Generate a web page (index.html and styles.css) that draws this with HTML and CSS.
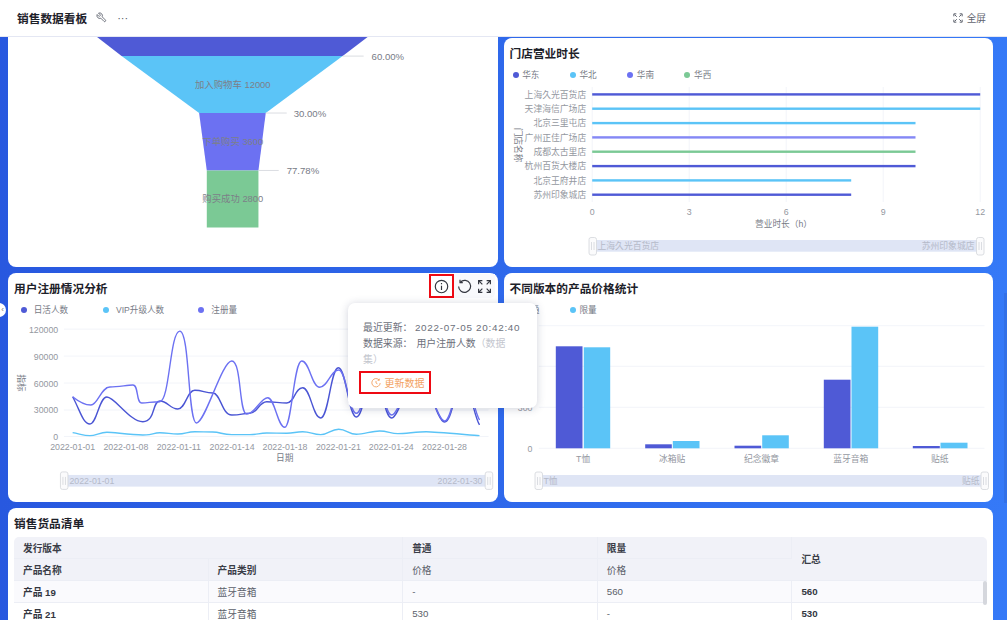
FILE: index.html
```html
<!DOCTYPE html>
<html lang="zh-CN">
<head>
    <meta charset="UTF-8">
    <meta name="viewport" content="width=device-width, initial-scale=1.0">
    <title>销售数据看板</title>
    <link rel="stylesheet" href="styles.css">
</head>
<body>
    <header class="topbar">
        <div class="topbar-left">
            <span class="board-title">销售数据看板</span>
            <svg class="wrench-icon" viewBox="0 0 24 24"><path d="M9.300 6.300a1 1 0 0 1 0 1.400L7.700 9.300a1 1 0 0 1-1.400 0L2.530 5.530a6 6 0 0 0 7.940 7.940l6.910 6.910a2.120 2.120 0 0 0 3-3l-6.910-6.910a6 6 0 0 0-7.940-7.940l3.760 3.760z"/></svg>
            <span class="more-dots">···</span>
        </div>
        <div class="topbar-right">
            <svg class="full-icon" viewBox="0 0 12 12"><path d="M1 4V1h3M8 1h3v3M11 8v3H8M4 11H1V8M2 2l2.500 2.500M10 2L7.500 4.500M10 10L7.500 7.500M2 10l2.500-2.500"/></svg>
            <span>全屏</span>
        </div>
    </header>

    <main class="board">
        <section class="card card-funnel">
            <svg class="chart chart-funnel" viewBox="8 30 490 237">
                <polygon fill="#4f5ad6" points="88.300,30 377,30 343,56 121.700,56"/>
                <polygon fill="#5bc4f7" points="121.700,56 343,56 266,113 199.300,113"/>
                <polygon fill="#6c71f2" points="199.300,113 266,113 258.700,170.500 207,170.500"/>
                <polygon fill="#7bc995" points="207,170.500 258.700,170.500 258.700,227.500 207,227.500"/>
                <path class="leader" d="M343 56h21M266 113h21M259 170.500h20"/>
                <text class="funnel-label" x="233" y="88">加入购物车 12000</text>
                <text class="funnel-label" x="233" y="145">下单购买 3600</text>
                <text class="funnel-label" x="233" y="202">购买成功 2800</text>
                <text class="percent" x="372" y="59.500">60.00%</text>
                <text class="percent" x="294" y="116.500">30.00%</text>
                <text class="percent" x="287" y="174">77.78%</text>
            </svg>
        </section>

        <section class="card">
            <h2 class="card-title">门店营业时长</h2>
            <div class="legend legend-tight">
                <span class="legend-item"><i class="dot dot-blue"></i>华东</span>
                <span class="legend-item"><i class="dot dot-sky"></i>华北</span>
                <span class="legend-item"><i class="dot dot-violet"></i>华南</span>
                <span class="legend-item"><i class="dot dot-green"></i>华西</span>
            </div>
            <svg class="chart" viewBox="503.500 82 489.500 185">
                <path class="grid" d="M591.700 87v115M688.700 87v115M785.700 87v115M882.700 87v115M979.700 87v115"/>
                <rect class="bar-blue" x="591.700" y="93.200" width="388" height="2.400"/>
                <rect class="bar-sky" x="591.700" y="107.500" width="388" height="2.400"/>
                <rect class="bar-sky" x="591.700" y="121.900" width="323.300" height="2.400"/>
                <rect class="bar-violet" x="591.700" y="136.200" width="323.300" height="2.400"/>
                <rect class="bar-green" x="591.700" y="150.500" width="323.300" height="2.400"/>
                <rect class="bar-blue" x="591.700" y="164.900" width="323.300" height="2.400"/>
                <rect class="bar-sky" x="591.700" y="179.200" width="259" height="2.400"/>
                <rect class="bar-blue" x="591.700" y="193.500" width="259" height="2.400"/>
                <text class="tick end" x="585.700" y="97.500">上海久光百货店</text>
                <text class="tick end" x="585.700" y="111.800">天津海信广场店</text>
                <text class="tick end" x="585.700" y="126.200">北京三里屯店</text>
                <text class="tick end" x="585.700" y="140.500">广州正佳广场店</text>
                <text class="tick end" x="585.700" y="154.800">成都太古里店</text>
                <text class="tick end" x="585.700" y="169.200">杭州百货大楼店</text>
                <text class="tick end" x="585.700" y="183.500">北京王府井店</text>
                <text class="tick end" x="585.700" y="197.800">苏州印象城店</text>
                <text class="tick mid" x="591.700" y="215">0</text>
                <text class="tick mid" x="688.700" y="215">3</text>
                <text class="tick mid" x="785.700" y="215">6</text>
                <text class="tick mid" x="882.700" y="215">9</text>
                <text class="tick mid" x="979.700" y="215">12</text>
                <text class="axis-name mid" x="783" y="227">营业时长（h）</text>
                <text class="axis-name mid" transform="translate(514 145) rotate(90)">门店名称</text>
                <rect class="slider-track" x="596" y="240" width="380" height="11.700"/>
                <text class="slider-text" x="597" y="249">上海久光百货店</text>
                <text class="slider-text end" x="974" y="249">苏州印象城店</text>
                <rect class="slider-handle" x="588.500" y="237.500" width="7.500" height="17.500" rx="2"/>
                <path class="slider-grip" d="M591 242v8M593.500 242v8"/>
                <rect class="slider-handle" x="976" y="237.500" width="7.500" height="17.500" rx="2"/>
                <path class="slider-grip" d="M978.500 242v8M981 242v8"/>
            </svg>
        </section>

        <section class="card card-users">
            <h2 class="card-title">用户注册情况分析</h2>
            <div class="legend legend-users">
                <span class="legend-item item-daily"><i class="dot dot-blue"></i>日活人数</span>
                <span class="legend-item item-vip"><i class="dot dot-sky"></i>VIP升级人数</span>
                <span class="legend-item"><i class="dot dot-violet"></i>注册量</span>
            </div>
            <svg class="chart" viewBox="8 317 490 185">
                <path class="grid" d="M64 329h425M64 356h425M64 383h425M64 410h425M64 436.500h425"/>
                <text class="tick end" x="58.300" y="332.500">120000</text>
                <text class="tick end" x="58.300" y="359.500">90000</text>
                <text class="tick end" x="58.300" y="386.500">60000</text>
                <text class="tick end" x="58.300" y="413.500">30000</text>
                <text class="tick end" x="58.300" y="440">0</text>
                <text class="tick mid" x="72.700" y="450">2022-01-01</text>
                <text class="tick mid" x="126" y="450">2022-01-08</text>
                <text class="tick mid" x="179" y="450">2022-01-11</text>
                <text class="tick mid" x="232.300" y="450">2022-01-14</text>
                <text class="tick mid" x="285.300" y="450">2022-01-18</text>
                <text class="tick mid" x="338.700" y="450">2022-01-21</text>
                <text class="tick mid" x="391.700" y="450">2022-01-24</text>
                <text class="tick mid" x="445" y="450">2022-01-28</text>
                <text class="axis-name mid" x="285" y="461.500">日期</text>
                <text class="axis-name mid" transform="translate(18 383) rotate(90)">指标</text>
                <path class="line line-blue" d="M72.700 396.700C80 410 83 424 90 424S99 397 107 397S130 421.700 143 421.700S152 401 160 401S170 409 178 409S187 390.300 195 390.300S205 393 213 393S222 415 232 415S242 413.300 250 413.300S259 401.700 267 401.700S279 403 287 403S295 387.700 303 387.700S313 418 321 418S331 367.700 338.700 367.700S349 417 356.700 417S366 375 374 375S384 418 392 418S410 370 418 370S437 422 445 422S455 385 463 385S474 415 480 425"/>
                <path class="line line-violet" d="M72.700 396.700C78 401 84 405 91 405S101 387 110 387S127 385 133 385S136 403 142 403S152 401.700 160 401.700C170 401 170 331 180 331S188 423 196.700 423S222 361 232 361S239 414 247 414S261 397.700 268 397.700S278 427.300 285 427.300S294 361 302 361S312 387.300 320 387.300S331 370 339 370S349 413.300 356.700 413.300S366 370 374 370S384 415 392 415S410 370 418 370S437 421 445 421S455 380 463 380S474 410 480 420"/>
                <path class="line line-sky" d="M72.700 432.700C80 434 84 435.700 90 435.700S100 432.300 107 432.300S130 435 143 435S152 432.700 160 432.700S170 434 178 434S187 431.700 195 431.700S205 432 213 432S222 434.700 232 434.700S242 434.700 250 434.700S259 433 267 433S279 433.300 287 433.300S295 431.700 303 431.700S313 434.700 321 434.700S331 429.300 339 429.300S349 434.300 356.700 434.300S372 431 380 431S391 433.700 398.300 433.700S418 431.700 426.700 431.700S470 435 480 435.700"/>
                <rect class="slider-track" x="68" y="475" width="418" height="11.700"/>
                <text class="slider-text" x="69.500" y="484">2022-01-01</text>
                <text class="slider-text end" x="483" y="484">2022-01-30</text>
                <rect class="slider-handle" x="60.500" y="472" width="7.500" height="17.500" rx="2"/>
                <path class="slider-grip" d="M63 477v8M65.500 477v8"/>
                <rect class="slider-handle" x="485.700" y="472" width="7.500" height="17.500" rx="2"/>
                <path class="slider-grip" d="M488.200 477v8M490.700 477v8"/>
            </svg>

            <div class="chart-tools">
                <button class="tool tool-marked">
                    <svg viewBox="0 0 14 14"><circle cx="7" cy="7" r="5.800"/><path d="M7 6.200v4M7 3.800v1"/></svg>
                </button>
                <button class="tool">
                    <svg viewBox="0 0 14 14"><path d="M3.200 2.800A5.600 5.600 0 1 1 1.500 7"/><path d="M2.800 0.800v2.600h2.600"/></svg>
                </button>
                <button class="tool">
                    <svg viewBox="0 0 14 14"><path d="M1.500 5V1.500H5M9 1.500h3.500V5M12.500 9v3.500H9M5 12.500H1.500V9M2 2l3 3M12 2L9 5M12 12L9 9M2 12l3-3"/></svg>
                </button>
            </div>

            <div class="info-pop">
                <p class="info-line">最近更新：<span class="info-date">2022-07-05 20:42:40</span></p>
                <p class="info-line">数据来源：<span class="info-source">用户注册人数</span><span class="info-muted">（数据<br>集）</span></p>
                <button class="update-btn">
                    <svg viewBox="0 0 12 12"><path d="M9.800 2.400A5 5 0 1 0 11 6"/><path d="M9.900 0.800v2h-2M6 3.500V6l1.800 1"/></svg>
                    更新数据
                </button>
            </div>
        </section>

        <section class="card">
            <h2 class="card-title">不同版本的产品价格统计</h2>
            <div class="legend legend-tight">
                <span class="legend-item"><i class="dot dot-blue"></i>普通</span>
                <span class="legend-item"><i class="dot dot-sky"></i>限量</span>
            </div>
            <svg class="chart" viewBox="503.500 317 489.500 185">
                <path class="grid" d="M538.300 325.700H984M538.300 366.300H984M538.300 407.300H984M538.300 448.300H984"/>
                <text class="tick end" x="532" y="452">0</text>
                <text class="tick end" x="532" y="411">300</text>
                <rect class="col-blue" x="555.300" y="346.300" width="26.700" height="102"/>
                <rect class="col-sky" x="583.300" y="347.300" width="26.400" height="101"/>
                <rect class="col-blue" x="644.700" y="444.300" width="26.600" height="4"/>
                <rect class="col-sky" x="672.300" y="441" width="26.700" height="7.300"/>
                <rect class="col-blue" x="734" y="445.700" width="26.700" height="2.600"/>
                <rect class="col-sky" x="761.700" y="435.300" width="26.600" height="13"/>
                <rect class="col-blue" x="823.300" y="379.700" width="26.700" height="68.600"/>
                <rect class="col-sky" x="851" y="326.700" width="26.700" height="121.600"/>
                <rect class="col-blue" x="912.300" y="446" width="27" height="2.300"/>
                <rect class="col-sky" x="940" y="442.700" width="27" height="5.600"/>
                <text class="tick mid" x="582.700" y="461.500">T恤</text>
                <text class="tick mid" x="671.700" y="461.500">冰箱贴</text>
                <text class="tick mid" x="761" y="461.500">纪念徽章</text>
                <text class="tick mid" x="850.300" y="461.500">蓝牙音箱</text>
                <text class="tick mid" x="939.300" y="461.500">贴纸</text>
                <rect class="slider-track" x="541.700" y="475" width="438.600" height="11.700"/>
                <text class="slider-text" x="543" y="484">T恤</text>
                <text class="slider-text end" x="979" y="484">贴纸</text>
                <rect class="slider-handle" x="534.500" y="472" width="7.500" height="17.500" rx="2"/>
                <path class="slider-grip" d="M537 477v8M539.500 477v8"/>
                <rect class="slider-handle" x="980.500" y="472" width="7.500" height="17.500" rx="2"/>
                <path class="slider-grip" d="M983 477v8M985.500 477v8"/>
            </svg>
        </section>

        <section class="card card-table">
            <h2 class="card-title">销售货品清单</h2>
            <div class="table-wrap">
                <table class="goods">
                    <thead>
                        <tr>
                            <th colspan="2">发行版本</th>
                            <th>普通</th>
                            <th>限量</th>
                            <th rowspan="2">汇总</th>
                        </tr>
                        <tr>
                            <th>产品名称</th>
                            <th>产品类别</th>
                            <th class="th-light">价格</th>
                            <th class="th-light">价格</th>
                        </tr>
                    </thead>
                    <tbody>
                        <tr class="row-tint">
                            <td class="strong">产品 19</td>
                            <td>蓝牙音箱</td>
                            <td>-</td>
                            <td>560</td>
                            <td class="strong">560</td>
                        </tr>
                        <tr>
                            <td class="strong">产品 21</td>
                            <td>蓝牙音箱</td>
                            <td>530</td>
                            <td>-</td>
                            <td class="strong">530</td>
                        </tr>
                    </tbody>
                </table>
                <div class="table-thumb"></div>
            </div>
        </section>

        <div class="side-toggle">‹</div>
        <div class="page-thumb"></div>
    </main>
</body>
</html>
```

FILE: styles.css
```css
* {
    box-sizing: border-box;
}

html,
body {
    height: 100%;
}

body {
    margin: 0;
    overflow: hidden;
    display: flex;
    flex-direction: column;
    font-family: "Liberation Sans", "Noto Sans CJK SC", sans-serif;
    background: linear-gradient(90deg, #2858df 0%, #3579f7 100%);
    color: #1d2129;
}

.topbar {
    flex: none;
    height: 37px;
    display: flex;
    align-items: center;
    justify-content: space-between;
    padding: 0 21px 1px 17px;
    background: #fff;
    border-bottom: 1px solid #e4e7f3;
}

.topbar-left,
.topbar-right {
    display: flex;
    align-items: center;
}

.board-title {
    font-size: 11.700px;
    font-weight: 700;
}

.wrench-icon {
    width: 11px;
    height: 11px;
    margin-left: 9px;
    fill: none;
    stroke: #555a66;
    stroke-width: 1.800;
}

.more-dots {
    margin-left: 10px;
    font-size: 11px;
    color: #555a66;
}

.topbar-right {
    font-size: 9.700px;
    color: #5f636e;
}

.full-icon {
    width: 10px;
    height: 10px;
    margin-right: 4px;
    fill: none;
    stroke: #5f636e;
    stroke-width: 1.200;
}

.board {
    flex: 1;
    min-height: 0;
    position: relative;
    overflow: hidden;
    display: grid;
    grid-template-columns: 1fr 1fr;
    grid-template-rows: 229px 229px auto;
    gap: 6px;
    padding: 1px 14px 0 8px;
}

.card {
    min-width: 0;
    background: #fff;
    border-radius: 8px;
}

.card-funnel {
    margin-top: -8px;
}

.card-users {
    position: relative;
    z-index: 2;
}

.card-title {
    margin: 0;
    padding: 9px 6px 0;
    font-size: 11.700px;
    line-height: 14px;
    font-weight: 700;
    color: #1d2129;
}

.legend {
    display: flex;
    height: 14px;
    margin-top: 7px;
    font-size: 8.600px;
    line-height: 14px;
    color: #777b86;
}

.legend-tight {
    padding-left: 9px;
}

.legend-tight .legend-item {
    width: 57.300px;
}

.legend-users {
    padding-left: 12.700px;
}

.legend-users .item-daily {
    width: 82.300px;
}

.legend-users .item-vip {
    width: 95.300px;
}

.legend-item {
    display: flex;
    align-items: center;
    white-space: nowrap;
}

.dot {
    width: 6px;
    height: 6px;
    margin-right: 3.700px;
    border-radius: 50%;
}

.legend-users .dot {
    margin-right: 7px;
}

.dot-blue {
    background: #4f5ad6;
}

.dot-sky {
    background: #5bc4f7;
}

.dot-violet {
    background: #6c71f2;
}

.dot-green {
    background: #7bc995;
}

.chart {
    display: block;
    width: 100%;
    height: 185px;
}

.chart-funnel {
    height: 237px;
}

.chart text {
    font-size: 8.700px;
}

.chart .end {
    text-anchor: end;
}

.chart .mid {
    text-anchor: middle;
}

.chart .tick {
    fill: #94989f;
    font-size: 8.800px;
}

.chart .axis-name {
    fill: #777b86;
    font-size: 8.700px;
}

.chart .funnel-label {
    fill: #7d8088;
    font-size: 9.400px;
    text-anchor: middle;
}

.chart .percent {
    fill: #777b86;
    font-size: 9.600px;
}

.leader {
    fill: none;
    stroke: #d2d4da;
    stroke-width: 0.800;
}

.grid {
    fill: none;
    stroke: #eff1f8;
    stroke-width: 0.800;
}

.bar-blue {
    fill: #4f5ad6;
}

.bar-sky {
    fill: #5bc4f7;
}

.bar-violet {
    fill: #8488f5;
}

.bar-green {
    fill: #7bc995;
}

.col-blue {
    fill: #4f5ad6;
}

.col-sky {
    fill: #5bc4f7;
}

.line {
    fill: none;
    stroke-width: 1.400;
}

.line-blue {
    stroke: #4a55d4;
}

.line-violet {
    stroke: #6c71f2;
}

.line-sky {
    stroke: #5bc4f7;
}

.slider-track {
    fill: #dfe5f5;
}

.chart .slider-text {
    fill: #b5bac9;
    font-size: 8.800px;
}

.slider-handle {
    fill: #fbfbfc;
    stroke: #d3d5da;
    stroke-width: 0.800;
}

.slider-grip {
    fill: none;
    stroke: #d3d5da;
    stroke-width: 0.800;
}

.chart-tools {
    position: absolute;
    top: 1px;
    right: 2.500px;
    display: flex;
    height: 24px;
    background: #f8f9fc;
    border-radius: 0 0 5px 5px;
}

.tool {
    width: 20.500px;
    height: 24px;
    padding: 0;
    display: flex;
    align-items: center;
    justify-content: center;
    background: none;
    border: none;
}

.tool svg {
    width: 15px;
    height: 15px;
    flex: none;
    fill: none;
    stroke: #33363f;
    stroke-width: 1.100;
}

.tool-marked {
    width: 25.500px;
    background: #fff;
    border: 2px solid #ee0a13;
}

.info-pop {
    position: absolute;
    top: 30px;
    left: 340px;
    width: 189px;
    height: 105px;
    padding: 17px 15px 0;
    background: #fff;
    border-radius: 7px;
    box-shadow: 0 1px 8px rgba(40, 50, 90, 0.22);
    font-size: 9.900px;
    line-height: 15.800px;
    color: #6c707b;
}

.info-line {
    margin: 0;
}

.info-date {
    margin-left: 2.500px;
    letter-spacing: 0.720px;
}

.info-source {
    margin-left: 4px;
}

.info-muted {
    color: #c3c6ce;
}

.update-btn {
    display: flex;
    align-items: center;
    width: 72px;
    height: 22.500px;
    margin: 4px 0 0 -4px;
    padding: 0 0 0 9.500px;
    background: #fff;
    border: 2px solid #ee0a13;
    font-family: inherit;
    font-size: 10px;
    color: #f3a262;
    white-space: nowrap;
}

.update-btn svg {
    width: 10px;
    height: 10px;
    margin-right: 4px;
    fill: none;
    stroke: #f3a262;
    stroke-width: 1.100;
}

.card-table {
    grid-column: 1 / 3;
    height: 130px;
    padding: 0 6px;
}

.card-table .card-title {
    padding: 9px 0 0;
}

.table-wrap {
    position: relative;
    margin-top: 6px;
}

.goods {
    width: 100%;
    table-layout: fixed;
    border-collapse: separate;
    border-spacing: 0;
    font-size: 9.700px;
}

.goods th,
.goods td {
    height: 22px;
    padding: 0 9px;
    text-align: left;
    border-right: 1px solid #eceef5;
    border-bottom: 1px solid #eceef5;
}

.goods th {
    background: #f1f2f8;
    font-weight: 700;
    color: #3a3d47;
}

.goods th:last-child,
.goods td:last-child {
    border-right: none;
}

.goods thead tr:first-child th:first-child {
    border-top-left-radius: 5px;
}

.goods thead tr:first-child th:last-child {
    border-top-right-radius: 5px;
}

.goods .th-light {
    font-weight: 400;
    color: #5b5f6a;
}

.goods td {
    color: #5b5f6a;
}

.goods td.strong {
    font-weight: 700;
    color: #33363f;
}

.row-tint td {
    background: #fafafd;
}

.table-thumb {
    position: absolute;
    top: 44px;
    right: 0;
    width: 4.500px;
    height: 24px;
    background: #d5d7dd;
    border-radius: 2px;
}

.side-toggle {
    position: absolute;
    left: -1px;
    top: 266px;
    width: 7px;
    height: 14px;
    background: #fff;
    border-radius: 0 7px 7px 0;
    font-size: 8px;
    line-height: 13px;
    text-align: center;
    color: #777;
}

.page-thumb {
    position: absolute;
    top: 256px;
    right: 0;
    width: 3px;
    height: 210px;
    background: rgba(40, 70, 160, 0.18);
}
```
